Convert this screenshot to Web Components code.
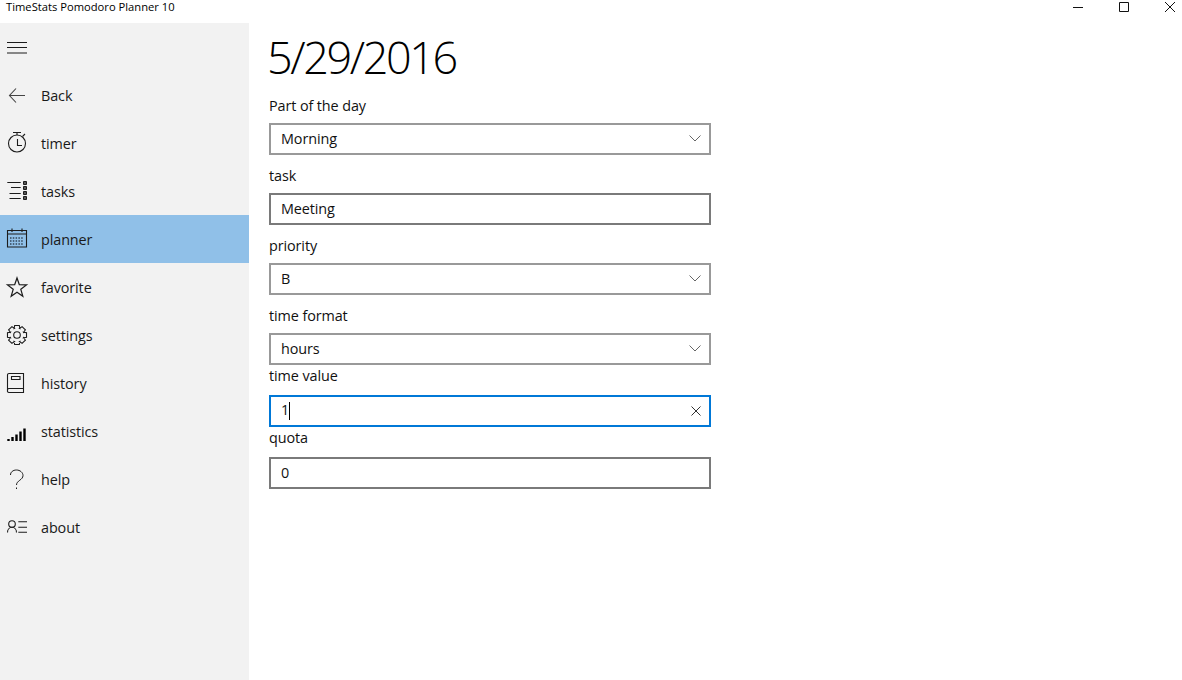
<!DOCTYPE html>
<html>
<head>
<meta charset="utf-8">
<style>
  html, body { margin: 0; height: 100%; background: #fff; overflow: hidden; }
  body { font-family: "Open Sans", "Liberation Sans", sans-serif; }
</style>
</head>
<body>
<app-shell>
  <title-bar slot="top">TimeStats Pomodoro Planner 10</title-bar>
  <nav-pane slot="nav">
    <nav-item kind="menu"></nav-item>
    <nav-item kind="back">Back</nav-item>
    <nav-item kind="timer">timer</nav-item>
    <nav-item kind="tasks">tasks</nav-item>
    <nav-item kind="planner" selected>planner</nav-item>
    <nav-item kind="favorite">favorite</nav-item>
    <nav-item kind="settings">settings</nav-item>
    <nav-item kind="history">history</nav-item>
    <nav-item kind="statistics">statistics</nav-item>
    <nav-item kind="help">help</nav-item>
    <nav-item kind="about">about</nav-item>
  </nav-pane>
  <planner-form slot="main">
    <form-field label="Part of the day"><input-box type="combo" value="Morning"></input-box></form-field>
    <form-field label="task"><input-box value="Meeting"></input-box></form-field>
    <form-field label="priority"><input-box type="combo" value="B"></input-box></form-field>
    <form-field label="time format" flush><input-box type="combo" value="hours"></input-box></form-field>
    <form-field label="time value" flush tall><input-box type="focus" value="1"></input-box></form-field>
    <form-field label="quota" flush tall><input-box value="0"></input-box></form-field>
  </planner-form>
</app-shell>

<script>
// Engranaje de 8 dientes para el icono de ajustes
function gearPath() {
  const pts = [];
  for (let i = 0; i < 8; i++) {
    const a = (i * Math.PI) / 4;
    [[-0.42, 7], [-0.24, 9.8], [0.24, 9.8], [0.42, 7]].forEach(([d, r]) => {
      pts.push((10 + r * Math.sin(a + d)).toFixed(2) + ' ' + (10 - r * Math.cos(a + d)).toFixed(2));
    });
  }
  return 'M' + pts.join('L') + 'Z';
}

// Iconos de la barra lateral, dibujados en una caja de 20x20
const ICONS = {
  menu: '<path d="M0 5.500h20M0 10.500h20M0 16h20"/>',
  back: '<path d="M9 3.500 2.500 10.500 9 17.500M2.500 10.500H18" stroke="#444"/>',
  timer: '<circle cx="10" cy="10.500" r="8.500"/><path d="M6 -.5h8M10 -.5v2.500M15.500 3.500l2.500-2.500M10.500 6v6.500H15"/>',
  tasks: '<path d="M.3 1.500h13.400M4 6.500h9.700M2.500 12.500h11.200M2.500 17.500h11.200"/><path d="M16.500 .5h3v3h-3zM16.500 5.500h3v3h-3zM16.500 10.500h3v3h-3zM16.500 15.500h3v3h-3z" fill="#555" stroke-width="1"/>',
  planner: '<path d="M.5 1.500h19v16.500H.5zM.5 5h19M5 -.5v3.500M15 -.5v3.500"/><path d="M3 9h14M3 12h14M3 15h14" stroke-dasharray="1.500 1.300" stroke-width="1.500" stroke="#345"/>',
  favorite: '<path d="M10 1l2.300 6.700 7.200.2-5.700 4.400 2 6.900L10 15.200l-5.800 4 2-6.900L.5 7.900l7.200-.2z" stroke-width="1.250"/>',
  settings: '<circle cx="10" cy="10" r="3.300"/><path d="' + gearPath() + '"/>',
  history: '<path d="M.5 17.500V2A1.500 1.500 0 0 1 2 .5h14.500V15.500H2A1.500 1.500 0 0 0 .5 17.500 1.500 1.500 0 0 0 2 19.500h14.500v-4M4.500 3.500h8.500v3H4.500z"/>',
  statistics: '<path d="M1.500 18v2M5.500 16v4M9.500 13.500V20M13.500 10.500V20M17.500 7.500V20" stroke="#000" stroke-width="2.400"/>',
  help: '<path d="M3.500 6C3.500 3 6 1 9.500 1S16 3.500 16 6.500c0 4.500-6.500 5-6.500 9.500M9.500 18.500V20" stroke-width="1"/>',
  about: '<circle cx="5" cy="7" r="3.300"/><path d="M.5 15.500c0-3 2-5.200 4.500-5.200s4.500 2.200 4.500 5.200M11.300 4.700H20M11.300 10.300H20M11.300 15.200H20"/>'
};

class AppShell extends HTMLElement {
  constructor() {
    super();
    this.attachShadow({ mode: 'open' }).innerHTML = `
      <style>
        :host { display: grid; grid-template: 23px 657px / 249px 933px; width: 1182px; height: 680px; overflow: hidden; }
        .top { grid-column: 1 / 3; }
      </style>
      <div class="top"><slot name="top"></slot></div>
      <slot name="nav"></slot>
      <slot name="main"></slot>`;
  }
}

class TitleBar extends HTMLElement {
  constructor() {
    super();
    this.attachShadow({ mode: 'open' }).innerHTML = `
      <style>
        :host { display: flex; height: 23px; justify-content: space-between; font-size: 11.200px; color: #000; }
        .title { padding: 0 0 0 6px; line-height: 14px; }
        .btns { display: flex; margin-right: -11px; }
        .btns svg { width: 46px; height: 14px; fill: none; stroke: #111; stroke-width: 1; }
      </style>
      <div class="title"><slot></slot></div>
      <div class="btns">
        <svg viewBox="0 0 46 14"><path d="M18 7.500h10"/></svg>
        <svg viewBox="0 0 46 14"><path d="M18.500 2.500h9v9h-9z"/></svg>
        <svg viewBox="0 0 46 14"><path d="M18 2l10 10M28 2 18 12"/></svg>
      </div>`;
  }
}

class NavPane extends HTMLElement {
  constructor() {
    super();
    this.attachShadow({ mode: 'open' }).innerHTML = `
      <style>
        :host { display: flex; flex-direction: column; background: #f2f2f2; }
      </style>
      <slot></slot>`;
  }
}

class NavItem extends HTMLElement {
  connectedCallback() {
    if (this.shadowRoot) return;
    const icon = ICONS[this.getAttribute('kind')] || '';
    this.attachShadow({ mode: 'open' }).innerHTML = `
      <style>
        :host { display: flex; align-items: center; height: 48px; padding-left: 7px; gap: 14px; font-size: 14.400px; letter-spacing: -.1px; color: #1a1a1a; }
        :host([selected]) { background: #90c0e8; }
        svg { width: 20px; height: 20px; flex: none; fill: none; stroke: #1c1c1c; stroke-width: 1.100; overflow: visible; }
      </style>
      <svg viewBox="0 0 20 20">${icon}</svg>
      <span><slot></slot></span>`;
  }
}

class PlannerForm extends HTMLElement {
  constructor() {
    super();
    this.attachShadow({ mode: 'open' }).innerHTML = `
      <style>
        :host { display: block; padding: 0 0 0 20px; color: #111; }
        h1 { margin: 0 0 0 -2px; padding-bottom: 5px; font-weight: 300; font-size: 45px; letter-spacing: -2.400px; line-height: 67px; color: #000; }
        .fields { display: flex; flex-direction: column; width: 442px; }
      </style>
      <h1>5/29/2016</h1>
      <div class="fields"><slot></slot></div>`;
  }
}

class FormField extends HTMLElement {
  connectedCallback() {
    if (this.shadowRoot) return;
    this.attachShadow({ mode: 'open' }).innerHTML = `
      <style>
        :host { display: block; padding-bottom: 10px; }
        :host([flush]) { padding-bottom: 0; }
        .label { font-size: 14.400px; letter-spacing: -.1px; line-height: 20px; padding: 1px 0 7px; }
        :host([tall]) .label { padding-bottom: 9px; }
      </style>
      <div class="label">${this.getAttribute('label')}</div>
      <slot></slot>`;
  }
}

class InputBox extends HTMLElement {
  connectedCallback() {
    if (this.shadowRoot) return;
    const type = this.getAttribute('type') || 'text';
    let tail = '';
    if (type === 'combo') tail = '<svg viewBox="0 0 12 7"><path d="M.5 .5 6 6l5.500-5.500"/></svg>';
    if (type === 'focus') tail = '<svg class="x" viewBox="0 0 10 10"><path d="M.5 .5l9 9M9.500 .5l-9 9"/></svg>';
    this.attachShadow({ mode: 'open' }).innerHTML = `
      <style>
        :host { display: flex; align-items: center; justify-content: space-between; box-sizing: border-box; height: 32px; padding: 0 8px 2px 10px; border: 2px solid #7a7a7a; background: #fff; font-size: 14.400px; letter-spacing: -.1px; color: #111; }
        :host([type="combo"]) { border-color: #999; }
        :host([type="focus"]) { border-color: #0078d7; }
        .caret { display: inline-block; width: 1px; height: 18px; background: #000; vertical-align: middle; }
        svg { width: 12px; height: 7px; margin-top: 1px; fill: none; stroke: #666; stroke-width: 1; }
        svg.x { width: 10px; height: 10px; margin-top: 2px; stroke: #333; }
      </style>
      <span>${this.getAttribute('value')}${type === 'focus' ? '<span class="caret"></span>' : ''}</span>
      ${tail}`;
  }
}

customElements.define('app-shell', AppShell);
customElements.define('title-bar', TitleBar);
customElements.define('nav-pane', NavPane);
customElements.define('nav-item', NavItem);
customElements.define('planner-form', PlannerForm);
customElements.define('form-field', FormField);
customElements.define('input-box', InputBox);
</script>
</body>
</html>
